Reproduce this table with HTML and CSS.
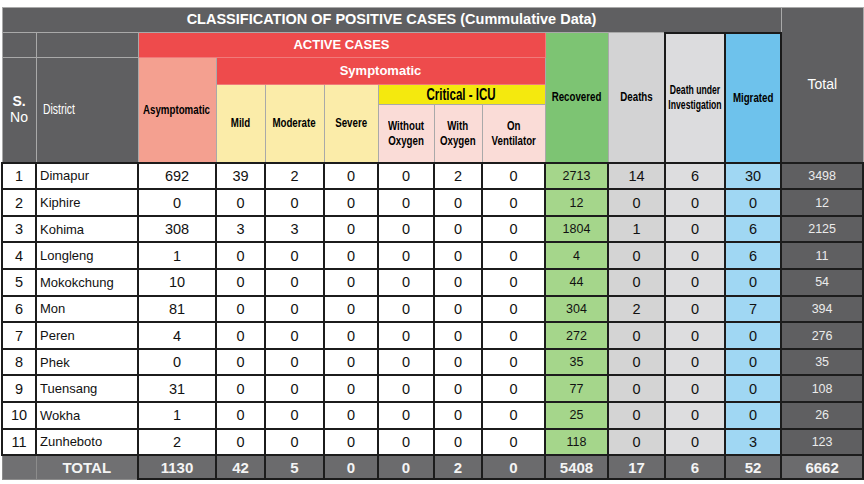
FILE: index.html
```html
<!DOCTYPE html>
<html>
<head>
<meta charset="utf-8">
<link rel="stylesheet" href="styles.css">
</head>
<body>
<div class="wrap">
<table class="sheet">
<colgroup>
<col class="c-sno"><col class="c-dist"><col class="c-asym"><col class="c-mild"><col class="c-mod"><col class="c-sev"><col class="c-wo"><col class="c-wi"><col class="c-ven"><col class="c-rec"><col class="c-dea"><col class="c-dui"><col class="c-mig"><col class="c-tot">
</colgroup>
<thead>
<tr class="h1">
<th colspan="13" class="dark title">CLASSIFICATION OF POSITIVE CASES (Cummulative Data)</th>
<th rowspan="5" class="dark htotal">Total</th>
</tr>
<tr class="h2">
<th class="dark"></th>
<th class="dark"></th>
<th colspan="7" class="red big">ACTIVE CASES</th>
<th rowspan="4" class="green nar"><span class="sq">Recovered</span></th>
<th rowspan="4" class="grey nar"><span class="sq">Deaths</span></th>
<th rowspan="4" class="lgrey nar dui boxed"><span class="sq">Death under<br>Investigation</span></th>
<th rowspan="4" class="blue nar boxed"><span class="sq">Migrated</span></th>
</tr>
<tr class="h3">
<th rowspan="3" class="dark sno"><b>S.</b><br>No</th>
<th rowspan="3" class="dark dist"><span class="sq sq-left">District</span></th>
<th rowspan="3" class="salmon nar"><span class="sq">Asymptomatic</span></th>
<th colspan="6" class="red big">Symptomatic</th>
</tr>
<tr class="h4">
<th rowspan="2" class="cream nar"><span class="sq">Mild</span></th>
<th rowspan="2" class="cream nar"><span class="sq">Moderate</span></th>
<th rowspan="2" class="cream nar"><span class="sq">Severe</span></th>
<th colspan="3" class="yellow nar icu"><span class="sq">Critical - ICU</span></th>
</tr>
<tr class="h5">
<th class="pink nar"><span class="sq">Without<br>Oxygen</span></th>
<th class="pink nar"><span class="sq">With<br>Oxygen</span></th>
<th class="pink nar"><span class="sq">On<br>Ventilator</span></th>
</tr>
</thead>
<tbody>
<tr><td>1</td><td class="name">Dimapur</td><td>692</td><td>39</td><td>2</td><td>0</td><td>0</td><td>2</td><td>0</td><td class="rec">2713</td><td class="dth">14</td><td class="dui-d">6</td><td class="mig">30</td><td class="tot">3498</td></tr>
<tr><td>2</td><td class="name">Kiphire</td><td>0</td><td>0</td><td>0</td><td>0</td><td>0</td><td>0</td><td>0</td><td class="rec">12</td><td class="dth">0</td><td class="dui-d">0</td><td class="mig">0</td><td class="tot">12</td></tr>
<tr><td>3</td><td class="name">Kohima</td><td>308</td><td>3</td><td>3</td><td>0</td><td>0</td><td>0</td><td>0</td><td class="rec">1804</td><td class="dth">1</td><td class="dui-d">0</td><td class="mig">6</td><td class="tot">2125</td></tr>
<tr><td>4</td><td class="name">Longleng</td><td>1</td><td>0</td><td>0</td><td>0</td><td>0</td><td>0</td><td>0</td><td class="rec">4</td><td class="dth">0</td><td class="dui-d">0</td><td class="mig">6</td><td class="tot">11</td></tr>
<tr><td>5</td><td class="name">Mokokchung</td><td>10</td><td>0</td><td>0</td><td>0</td><td>0</td><td>0</td><td>0</td><td class="rec">44</td><td class="dth">0</td><td class="dui-d">0</td><td class="mig">0</td><td class="tot">54</td></tr>
<tr><td>6</td><td class="name">Mon</td><td>81</td><td>0</td><td>0</td><td>0</td><td>0</td><td>0</td><td>0</td><td class="rec">304</td><td class="dth">2</td><td class="dui-d">0</td><td class="mig">7</td><td class="tot">394</td></tr>
<tr><td>7</td><td class="name">Peren</td><td>4</td><td>0</td><td>0</td><td>0</td><td>0</td><td>0</td><td>0</td><td class="rec">272</td><td class="dth">0</td><td class="dui-d">0</td><td class="mig">0</td><td class="tot">276</td></tr>
<tr><td>8</td><td class="name">Phek</td><td>0</td><td>0</td><td>0</td><td>0</td><td>0</td><td>0</td><td>0</td><td class="rec">35</td><td class="dth">0</td><td class="dui-d">0</td><td class="mig">0</td><td class="tot">35</td></tr>
<tr><td>9</td><td class="name">Tuensang</td><td>31</td><td>0</td><td>0</td><td>0</td><td>0</td><td>0</td><td>0</td><td class="rec">77</td><td class="dth">0</td><td class="dui-d">0</td><td class="mig">0</td><td class="tot">108</td></tr>
<tr><td>10</td><td class="name">Wokha</td><td>1</td><td>0</td><td>0</td><td>0</td><td>0</td><td>0</td><td>0</td><td class="rec">25</td><td class="dth">0</td><td class="dui-d">0</td><td class="mig">0</td><td class="tot">26</td></tr>
<tr><td>11</td><td class="name">Zunheboto</td><td>2</td><td>0</td><td>0</td><td>0</td><td>0</td><td>0</td><td>0</td><td class="rec">118</td><td class="dth">0</td><td class="dui-d">0</td><td class="mig">3</td><td class="tot">123</td></tr>
<tr class="sum"><td class="sum-lead"></td><td class="sum-lead sum-label">TOTAL</td><td>1130</td><td>42</td><td>5</td><td>0</td><td>0</td><td>2</td><td>0</td><td>5408</td><td>17</td><td>6</td><td>52</td><td>6662</td></tr>
</tbody>
</table>
</div>
</body>
</html>
```
FILE: styles.css
```css
html, body {
  margin: 0;
  padding: 0;
  background: #ffffff;
}
body {
  font-family: "Liberation Sans", Arial, sans-serif;
  color: #111;
}
.wrap {
  padding: 7px 0 0 1px;
}
.sheet {
  border-collapse: collapse;
  table-layout: fixed;
  width: 861px;
}
.c-sno { width: 34px; }
.c-dist { width: 102px; }
.c-asym { width: 78px; }
.c-mild { width: 49px; }
.c-mod { width: 59px; }
.c-sev { width: 54px; }
.c-wo { width: 56px; }
.c-wi { width: 48px; }
.c-ven { width: 63px; }
.c-rec { width: 63px; }
.c-dea { width: 57px; }
.c-dui { width: 60px; }
.c-mig { width: 56px; }
.c-tot { width: 82px; }

.sheet th {
  border: 1px solid #a9a9a9;
  padding: 0;
  text-align: center;
  vertical-align: middle;
  line-height: 1.2;
  white-space: nowrap;
}
.h1 { height: 25px; }
.h2 { height: 25px; }
.h3 { height: 27px; }
.h4 { height: 19px; }
.h5 { height: 58px; }

.dark { background: #5f5f61; color: #fff; }
.red { background: #ee4b4c; color: #fff; border-color: #f07a7a !important; }
.salmon { background: #f4a090; }
.cream { background: #fbeca9; }
.yellow { background: #f4e90e; }
.pink { background: #fadcd7; }
.green { background: #7dc473; }
.grey { background: #d3d3d4; }
.lgrey { background: #dcdcde; }
.blue { background: #6ec2ec; }
.boxed { border: 2px solid #1a1a1a !important; }

.title {
  font-size: 14.5px;
  font-weight: bold;
}
.htotal {
  font-size: 14px;
  font-weight: normal;
}
.big {
  font-size: 13px;
  font-weight: bold;
}
.nar {
  font-size: 13.5px;
  font-weight: bold;
  color: #000;
}
.sq {
  display: inline-block;
  transform: scaleX(0.72);
  margin: 0 -16px;
  text-align: center;
  line-height: 15px;
}
.sq-left {
  transform-origin: left center;
  margin: 0;
  text-align: left;
}
.icu { font-size: 16px; }
.dui { font-size: 12px; }
.sno {
  font-size: 14px;
  font-weight: normal;
  line-height: 1.1 !important;
}
.dist {
  font-size: 14.5px;
  font-weight: normal;
  text-align: left !important;
  padding-left: 6px !important;
}

.sheet td {
  border: 2px solid #1c1c1c;
  padding: 0;
  height: 24.6px;
  text-align: center;
  vertical-align: middle;
  font-size: 14.5px;
  background: #fff;
}
.sheet td.name {
  text-align: left;
  padding-left: 3px;
  font-size: 13px;
}
.sheet td.rec { background: #a5d68b; font-size: 12.5px; }
.sheet td.dth { background: #d4d4d4; }
.sheet td.dui-d { background: #dddddf; }
.sheet td.mig { background: #a0d7f3; }
.sheet td.tot { background: #5f5f61; color: #ebebeb; font-size: 12.5px; }

.sum td {
  background: #6b6b6d;
  color: #f4f4f4;
  font-weight: bold;
  font-size: 15px;
  height: 22px;
}
.sum td.sum-lead {
  background: #707072;
  border: 1px solid #8c8c8c;
}
```
